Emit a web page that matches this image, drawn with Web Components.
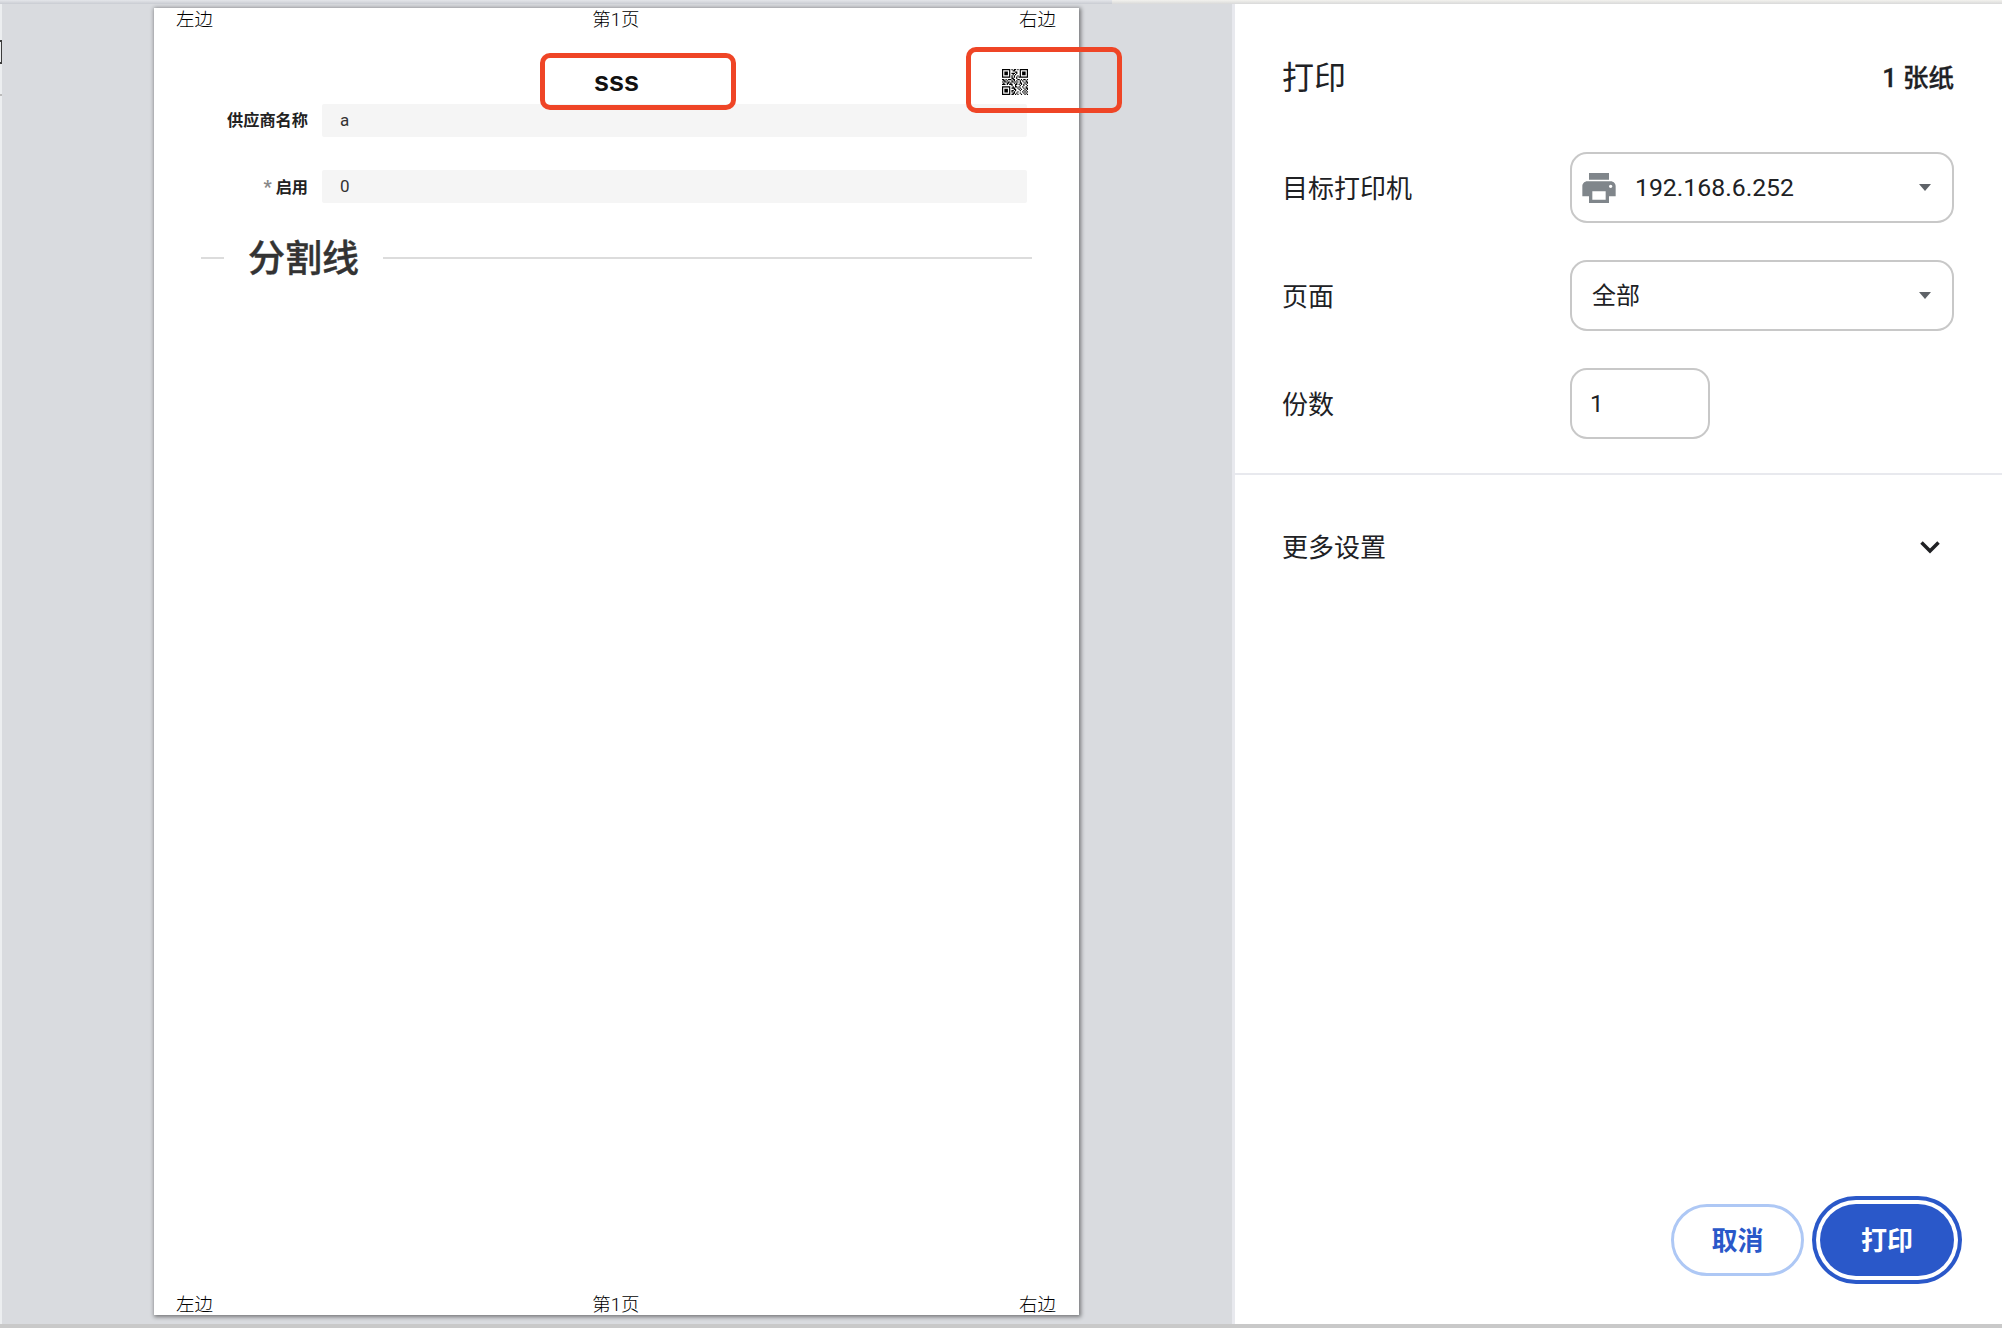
<!DOCTYPE html>
<html lang="zh">
<head>
<meta charset="utf-8">
<title>打印</title>
<style>
  html, body { margin: 0; padding: 0; }
  body { font-family: Roboto, "Noto Sans CJK SC", sans-serif; color: #202124; }
</style>
</head>
<body>
<print-preview>
  <paper-sheet slot="preview">
    <page-margin slot="header"><span slot="left">左边</span><span slot="center">第1页</span><span slot="right">右边</span></page-margin>
    <sheet-title><qr-code slot="side"></qr-code>sss</sheet-title>
    <form-field label="供应商名称">a</form-field>
    <form-field label="启用" required>0</form-field>
    <section-divider>分割线</section-divider>
    <page-margin slot="footer"><span slot="left">左边</span><span slot="center">第1页</span><span slot="right">右边</span></page-margin>
  </paper-sheet>
  <print-panel slot="panel">
    <setting-row label="目标打印机"><select-box printer>192.168.6.252</select-box></setting-row>
    <setting-row label="页面"><select-box>全部</select-box></setting-row>
    <setting-row label="份数"><number-box>1</number-box></setting-row>
  </print-panel>
</print-preview>

<script>
const FONT = 'Roboto, "Noto Sans CJK SC", sans-serif';

class BaseElement extends HTMLElement {
  render(html) {
    this.attachShadow({ mode: 'open' });
    this.shadowRoot.innerHTML = html;
  }
}

class PrintPreview extends BaseElement {
  connectedCallback() {
    this.render(`
      <style>
        :host { display: flex; flex-direction: column; position: relative; width: 2002px; height: 1328px; overflow: hidden; background: #d9dbdf; }
        .top { display: flex; height: 4px; flex: none; }
        .top i { flex: 1112; background: linear-gradient(#e4e6ea, #c9ccd2); }
        .top b { flex: 890; background: linear-gradient(#f3f2ee, #d9d9d9); }
        .main { display: flex; flex: 1; min-height: 0; }
        .preview { flex: 1; display: flex; padding: 4px 0 9px 152px; border-left: 2px solid #eceef0; position: relative; }
        .bottom { height: 4px; flex: none; background: #c9c9c9; }
        .mark { position: absolute; box-sizing: border-box; border: 5px solid #ef4526; border-radius: 10px; }
        .bracket { position: absolute; left: 0; top: 40px; box-sizing: border-box; width: 2px; height: 24px; border: solid #3c3c3c; border-width: 2px 1px 2px 0; }
        .tick { position: absolute; left: 0; top: 94px; width: 2px; height: 2px; background: #bbb; }
      </style>
      <div class="top"><i></i><b></b></div>
      <div class="main">
        <div class="preview"><slot name="preview"></slot></div>
        <slot name="panel"></slot>
      </div>
      <div class="bottom"></div>
      <div class="bracket"></div>
      <div class="tick"></div>
      <div class="mark" style="left:540px;top:53px;width:196px;height:57px"></div>
      <div class="mark" style="left:966px;top:47px;width:156px;height:66px"></div>
    `);
  }
}

class PaperSheet extends BaseElement {
  connectedCallback() {
    this.render(`
      <style>
        :host { display: flex; flex-direction: column; width: 925px; background: #fff; box-shadow: 1px 1px 4px 1px rgba(0,0,0,.45); }
        .body { flex: 1; }
      </style>
      <slot name="header"></slot>
      <div class="body"><slot></slot></div>
      <slot name="footer"></slot>
    `);
  }
}

class PageMargin extends BaseElement {
  connectedCallback() {
    this.render(`
      <style>
        :host { display: grid; grid-template-columns: 1fr auto 1fr; align-items: center; height: 23px; padding: 1px 23px 0 22px; font: 300 18.5px/23px ${FONT}; color: #000; }
        :host([slot="footer"]) { margin-bottom: -2px; }
        .right { justify-self: end; }
      </style>
      <div><slot name="left"></slot></div>
      <div><slot name="center"></slot></div>
      <div class="right"><slot name="right"></slot></div>
    `);
  }
}

class SheetTitle extends BaseElement {
  connectedCallback() {
    this.render(`
      <style>
        :host { display: grid; grid-template-columns: 1fr auto 1fr; align-items: center; height: 26px; margin: 37px 0 9px; padding-right: 51px; font: 700 27px/26px "Liberation Sans", sans-serif; color: #111; }
        .side { grid-column: 3; grid-row: 1; justify-self: end; display: flex; }
        .name { grid-column: 2; grid-row: 1; padding-left: 51px; }
      </style>
      <div class="name"><slot></slot></div>
      <div class="side"><slot name="side"></slot></div>
    `);
  }
}

// fixed module pattern, it is only read as "a qr code" at this size
const QR_ROWS = [
  '1111111010110101111111',
  '1000001001100001000001',
  '1011101000011001011101',
  '1011101011101001011101',
  '1011101001010001011101',
  '1000001010100101000001',
  '1111111010101011111111',
  '0000000011001000000000',
  '1101011101100110101101',
  '0110100010101001010010',
  '1011011011010101001011',
  '0100110100101001100101',
  '1110101110011010101010',
  '0000000010010001001001',
  '1111111001011010010010',
  '1000001011100101001011',
  '1011101000110010100101',
  '1011101011010001001010',
  '1011101010100100010101',
  '1000001001101001001010',
  '1111111011010100100101'
];

class QrCode extends BaseElement {
  connectedCallback() {
    let d = '';
    QR_ROWS.forEach((row, y) => {
      [...row].forEach((c, x) => { if (c === '1') d += `M${x} ${y}h1v1h-1z`; });
    });
    this.render(`
      <style>:host { display: block; width: 26px; height: 26px; } svg { display: block; }</style>
      <svg width="26" height="26" viewBox="0 0 22 21" preserveAspectRatio="none"><path d="${d}" fill="#000"/></svg>
    `);
  }
}

class FormField extends BaseElement {
  connectedCallback() {
    const star = this.hasAttribute('required') ? '<span class="star">*</span>' : '';
    this.render(`
      <style>
        :host { display: flex; align-items: center; height: 33px; margin-bottom: 33px; padding: 0 52px 0 0; }
        .label { width: 154px; flex: none; text-align: right; font: 700 16.2px/33px ${FONT}; color: #222; }
        .star { color: #888; font-size: 18px; margin-right: 4px; }
        .value { flex: 1; margin-left: 14px; height: 33px; padding-left: 18px; background: #f5f5f5; border-radius: 2px; font: 400 17px/33px ${FONT}; color: #333; }
      </style>
      <div class="label">${star}${this.getAttribute('label')}</div>
      <div class="value"><slot></slot></div>
    `);
  }
}

class SectionDivider extends BaseElement {
  connectedCallback() {
    this.render(`
      <style>
        :host { display: flex; align-items: center; gap: 24px; height: 44px; margin-top: 4px; padding: 0 47px; font: 500 37px/44px ${FONT}; color: #333; }
        span { padding-top: 3px; -webkit-text-stroke: .4px #333; }
        i { height: 2px; background: #dcdcdc; }
        .l { width: 23px; flex: none; }
        .r { flex: 1; }
      </style>
      <i class="l"></i><span><slot></slot></span><i class="r"></i>
    `);
  }
}

class PrintPanel extends BaseElement {
  connectedCallback() {
    this.render(`
      <style>
        :host { display: flex; flex-direction: column; box-sizing: border-box; width: 770px; background: #fff; border-left: 3px solid #e8e9ee; font-family: ${FONT}; color: #202124; }
        .head { display: flex; justify-content: space-between; align-items: center; box-sizing: border-box; height: 148px; padding: 0 48px 0 47px; }
        .head h1 { margin: 0; font: 400 32px/40px ${FONT}; }
        .head span { font: 500 25.5px/40px ${FONT}; -webkit-text-stroke: .3px #202124; }
        .rows { display: flex; flex-direction: column; gap: 37px; padding: 0 48px 34px 47px; border-bottom: 2px solid #e8e9ee; }
        .more { display: flex; justify-content: space-between; align-items: center; height: 146px; padding: 0 61px 0 47px; font: 400 26px/40px ${FONT}; }
        .more svg { display: block; margin-top: -2px; }
        .actions { margin-top: auto; display: flex; justify-content: flex-end; gap: 16px; padding: 0 48px 48px 0; }
        button { box-sizing: border-box; height: 72px; padding: 2px 0 0; border-radius: 36px; font: 700 26px/1 ${FONT}; cursor: pointer; }
        .cancel { width: 133px; background: #fff; color: #2a58c9; border: 3px solid #aec8f5; }
        .ok { width: 134px; background: #2a58c9; color: #fff; border: none; box-shadow: 0 0 0 4px #fff, 0 0 0 8px #2a58c9; }
      </style>
      <div class="head"><h1>打印</h1><span>1 张纸</span></div>
      <div class="rows"><slot></slot></div>
      <div class="more">更多设置
        <svg width="22" height="14" viewBox="0 0 22 14"><path d="M2.5 2.5 11 11l8.5-8.5" fill="none" stroke="#202124" stroke-width="3.5"/></svg>
      </div>
      <div class="actions">
        <button class="cancel">取消</button>
        <button class="ok">打印</button>
      </div>
    `);
  }
}

class SettingRow extends BaseElement {
  connectedCallback() {
    this.render(`
      <style>
        :host { display: flex; align-items: center; font: 400 26px/34px ${FONT}; color: #202124; }
        .label { width: 288px; flex: none; padding-top: 2px; }
      </style>
      <div class="label">${this.getAttribute('label')}</div>
      <slot></slot>
    `);
  }
}

class SelectBox extends BaseElement {
  connectedCallback() {
    const icon = this.hasAttribute('printer')
      ? '<svg class="icon" width="40" height="40" viewBox="0 0 24 24"><path fill="#80868b" d="M19 8H5c-1.66 0-3 1.34-3 3v6h4v4h12v-4h4v-6c0-1.66-1.34-3-3-3zm-3 11H8v-5h8v5zm3-7c-.55 0-1-.45-1-1s.45-1 1-1 1 .45 1 1-.45 1-1 1zm-1-9H6v4h12V3z"/></svg>'
      : '';
    this.render(`
      <style>
        :host { display: flex; align-items: center; box-sizing: border-box; width: 385px; height: 71px; padding: 0 21px 0 20px; border: 2.5px solid #c8c8c8; border-radius: 17px; font: 400 24px/34px ${FONT}; color: #202124; }
        :host([printer]) { padding-left: 7px; font-size: 24.8px; }
        .icon { flex: none; margin-right: 16px; }
        .text { flex: 1; }
        .caret { width: 0; height: 0; border: 6.5px solid transparent; border-top: 7px solid #5f6368; border-bottom: 0; }
      </style>
      ${icon}<div class="text"><slot></slot></div><div class="caret"></div>
    `);
  }
}

class NumberBox extends BaseElement {
  connectedCallback() {
    this.render(`
      <style>
        :host { display: block; box-sizing: border-box; width: 140px; height: 71px; padding-left: 18px; border: 2.5px solid #c8c8c8; border-radius: 17px; font: 400 24px/68px ${FONT}; color: #202124; }
      </style>
      <slot></slot>
    `);
  }
}

customElements.define('print-preview', PrintPreview);
customElements.define('paper-sheet', PaperSheet);
customElements.define('page-margin', PageMargin);
customElements.define('sheet-title', SheetTitle);
customElements.define('qr-code', QrCode);
customElements.define('form-field', FormField);
customElements.define('section-divider', SectionDivider);
customElements.define('print-panel', PrintPanel);
customElements.define('setting-row', SettingRow);
customElements.define('select-box', SelectBox);
customElements.define('number-box', NumberBox);
</script>
</body>
</html>
